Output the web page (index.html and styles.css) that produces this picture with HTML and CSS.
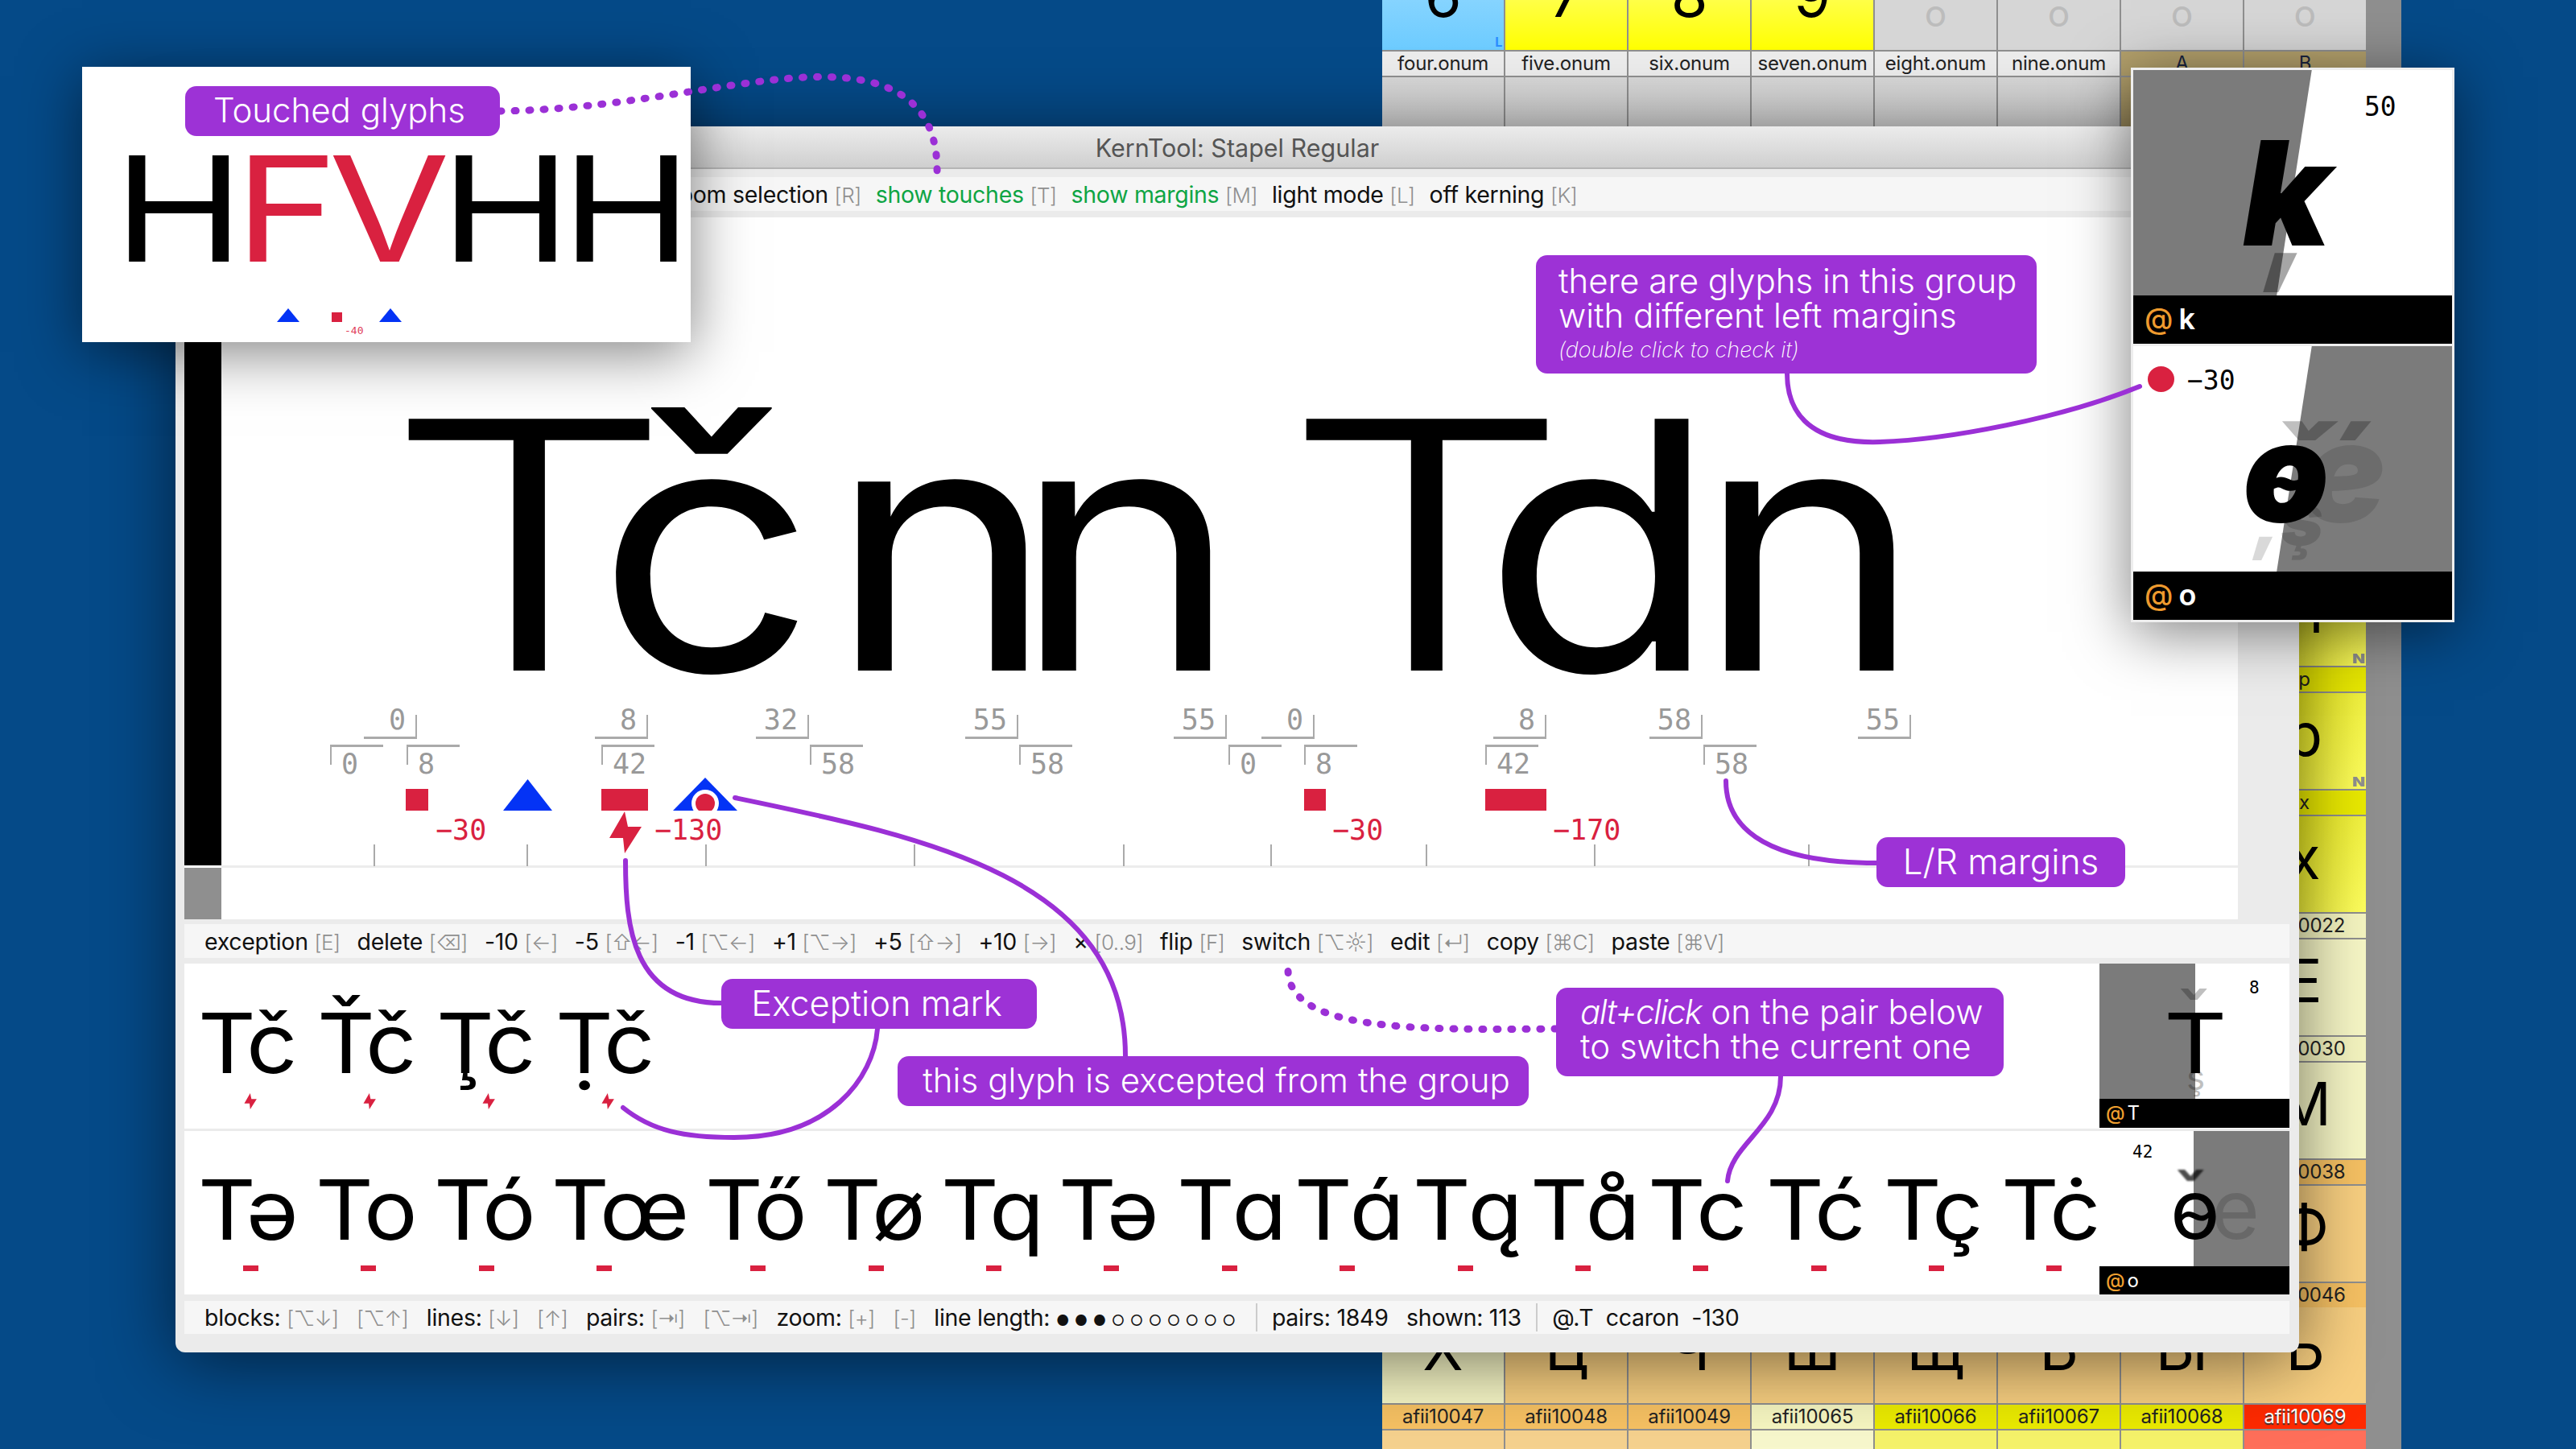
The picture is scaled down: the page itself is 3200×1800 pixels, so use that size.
FILE: index.html
```html
<!DOCTYPE html>
<html>
<head>
<meta charset="utf-8">
<title>KernTool: Stapel Regular</title>
<link rel="stylesheet" href="styles.css">
</head>
<body>

<!-- glyph table behind the kern window -->
<div class="sheet-back"></div>
<div class="sheet sheet-top">
  <div class="cell c-blue"><span class="g">6</span><i class="mark-l">L</i></div>
  <div class="cell c-yellow"><span class="g">7</span></div>
  <div class="cell c-yellow"><span class="g">8</span></div>
  <div class="cell c-yellow"><span class="g">9</span></div>
  <div class="cell c-gray"><span class="g g-empty">o</span></div>
  <div class="cell c-gray"><span class="g g-empty">o</span></div>
  <div class="cell c-gray"><span class="g g-empty">o</span></div>
  <div class="cell c-gray"><span class="g g-empty">o</span></div>
  <div class="lbl">four.onum</div>
  <div class="lbl">five.onum</div>
  <div class="lbl">six.onum</div>
  <div class="lbl">seven.onum</div>
  <div class="lbl">eight.onum</div>
  <div class="lbl">nine.onum</div>
  <div class="lbl l-tan">A</div>
  <div class="lbl l-tan">B</div>
  <div class="cell c-blank"></div>
  <div class="cell c-blank"></div>
  <div class="cell c-blank"></div>
  <div class="cell c-blank"></div>
  <div class="cell c-blank"></div>
  <div class="cell c-blank"></div>
  <div class="cell c-tan"></div>
  <div class="cell c-tan"></div>
</div>

<div class="sheet sheet-side">
  <div class="cell c-lemon"><span class="g g-stem">l</span><i class="mark-n">N</i></div>
  <div class="lbl l-yellow">p</div>
  <div class="cell c-lemon"><span class="g">p</span><i class="mark-n">N</i></div>
  <div class="lbl l-yellow">x</div>
  <div class="cell c-lemon"><span class="g">x</span></div>
  <div class="lbl l-pale">afii10022</div>
  <div class="cell c-pale"><span class="g">Е</span></div>
  <div class="lbl l-pale">afii10030</div>
  <div class="cell c-pale"><span class="g">М</span></div>
  <div class="lbl l-orange">afii10038</div>
  <div class="cell c-orange"><span class="g">Ф</span></div>
  <div class="lbl l-orange">afii10046</div>
  <div class="cell c-orange"><span class="g">Ь</span></div>
</div>

<div class="sheet sheet-bottom">
  <div class="cell c-pale"><span class="g">Х</span></div>
  <div class="cell c-orange"><span class="g">Ц</span></div>
  <div class="cell c-orange"><span class="g">Ч</span></div>
  <div class="cell c-orange"><span class="g">Ш</span></div>
  <div class="cell c-orange"><span class="g">Щ</span></div>
  <div class="cell c-orange"><span class="g">Ь</span></div>
  <div class="cell c-orange"><span class="g">Ы</span></div>
  <div class="cell c-orange"><span class="g">Ь</span></div>
  <div class="lbl l-orange">afii10047</div>
  <div class="lbl l-orange">afii10048</div>
  <div class="lbl l-orange">afii10049</div>
  <div class="lbl l-pale">afii10065</div>
  <div class="lbl l-yellow">afii10066</div>
  <div class="lbl l-yellow">afii10067</div>
  <div class="lbl l-yellow">afii10068</div>
  <div class="lbl l-red">afii10069</div>
  <div class="cell c-peach"></div>
  <div class="cell c-peach"></div>
  <div class="cell c-peach"></div>
  <div class="cell c-cream"></div>
  <div class="cell c-lime"></div>
  <div class="cell c-lime"></div>
  <div class="cell c-lime"></div>
  <div class="cell c-coral"></div>
</div>

<!-- kern window -->
<div class="window">
  <div class="titlebar">KernTool: Stapel Regular</div>

  <div class="bar bar-top">
    <span>zoom selection <b>[R]</b></span>
    <span class="on">show touches <b>[T]</b></span>
    <span class="on">show margins <b>[M]</b></span>
    <span>light mode <b>[L]</b></span>
    <span>off kerning <b>[K]</b></span>
  </div>

  <div class="stage">
    <div class="scroll">
      <div class="scroll-thumb"></div>
      <div class="scroll-rest"></div>
    </div>
    <div class="canvas-wrap">
      <div class="canvas">
        <div class="line-big">
          <span class="gl gl-t w-t1">T</span>
          <span class="gl gl-c w-c">č</span>
          <span class="gl gl-n w-n1">n</span>
          <span class="gl gl-n w-n2">n</span>
          <span class="gl gl-t w-t2">T</span>
          <span class="gl gl-d w-d">d</span>
          <span class="gl gl-n">n</span>
        </div>
        <div class="metrics">
          <div class="mr" style="left:177px">0</div>
          <div class="mr" style="left:464px">8</div>
          <div class="mr" style="left:664px">32</div>
          <div class="mr" style="left:924px">55</div>
          <div class="mr" style="left:1183px">55</div>
          <div class="mr" style="left:1292px">0</div>
          <div class="mr" style="left:1580px">8</div>
          <div class="mr" style="left:1774px">58</div>
          <div class="mr" style="left:2033px">55</div>

          <div class="ml" style="left:135px">0</div>
          <div class="ml" style="left:230px">8</div>
          <div class="ml" style="left:472px">42</div>
          <div class="ml" style="left:731px">58</div>
          <div class="ml" style="left:991px">58</div>
          <div class="ml" style="left:1251px">0</div>
          <div class="ml" style="left:1345px">8</div>
          <div class="ml" style="left:1570px">42</div>
          <div class="ml" style="left:1841px">58</div>

          <div class="kern" style="left:229px;width:28px"></div>
          <div class="kern" style="left:472px;width:58px"></div>
          <div class="kern" style="left:1345px;width:27px"></div>
          <div class="kern" style="left:1570px;width:76px"></div>

          <div class="tri tri-1"></div>
          <div class="tri tri-2"></div>
          <div class="tri-dot"></div>

          <svg class="bolt-big" viewBox="0 0 41 52"><path d="M20 0 L1 33 L18 33 L20 52 L41 19 L24 19 Z"/></svg>

          <div class="val" style="left:266px">−30</div>
          <div class="val" style="left:538px">−130</div>
          <div class="val" style="left:1380px">−30</div>
          <div class="val" style="left:1654px">−170</div>

          <i class="tick" style="left:189px"></i>
          <i class="tick" style="left:379px"></i>
          <i class="tick" style="left:601px"></i>
          <i class="tick" style="left:860px"></i>
          <i class="tick" style="left:1120px"></i>
          <i class="tick" style="left:1303px"></i>
          <i class="tick" style="left:1496px"></i>
          <i class="tick" style="left:1705px"></i>
          <i class="tick" style="left:1971px"></i>
        </div>
      </div>
    </div>
  </div>

  <div class="bar bar-mid">
    <span>exception <b>[E]</b></span>
    <span>delete <b>[⌫]</b></span>
    <span>-10 <b>[←]</b></span>
    <span>-5 <b>[⇧←]</b></span>
    <span>-1 <b>[⌥←]</b></span>
    <span>+1 <b>[⌥→]</b></span>
    <span>+5 <b>[⇧→]</b></span>
    <span>+10 <b>[→]</b></span>
    <span>× <b>[0..9]</b></span>
    <span>flip <b>[F]</b></span>
    <span>switch <b>[⌥☼]</b></span>
    <span>edit <b>[↵]</b></span>
    <span>copy <b>[⌘C]</b></span>
    <span>paste <b>[⌘V]</b></span>
  </div>

  <div class="row row-1">
    <div class="pairs">
      <div class="pair"><span>Tč</span><svg class="bolt" viewBox="0 0 41 52"><path d="M20 0 L1 33 L18 33 L20 52 L41 19 L24 19 Z"/></svg></div>
      <div class="pair"><span>Ťč</span><svg class="bolt" viewBox="0 0 41 52"><path d="M20 0 L1 33 L18 33 L20 52 L41 19 L24 19 Z"/></svg></div>
      <div class="pair"><span>Ţč</span><svg class="bolt" viewBox="0 0 41 52"><path d="M20 0 L1 33 L18 33 L20 52 L41 19 L24 19 Z"/></svg></div>
      <div class="pair"><span>Ṭč</span><svg class="bolt" viewBox="0 0 41 52"><path d="M20 0 L1 33 L18 33 L20 52 L41 19 L24 19 Z"/></svg></div>
    </div>
    <div class="thumb">
      <div class="shade shade-left"></div>
      <span class="ghost ghost-caron">ˇ</span>
      <span class="ghost ghost-hook">ş</span>
      <span class="glyph glyph-t">T</span>
      <span class="num num-r">8</span>
      <div class="thumb-foot"><em>@</em>T</div>
    </div>
  </div>

  <div class="row row-2">
    <div class="pairs">
      <div class="pair pair-b"><span>Tə</span><i class="dash"></i></div>
      <div class="pair pair-b"><span>To</span><i class="dash"></i></div>
      <div class="pair pair-b"><span>Tó</span><i class="dash"></i></div>
      <div class="pair pair-b pair-wide"><span>Tœ</span><i class="dash"></i></div>
      <div class="pair pair-b"><span>Tő</span><i class="dash"></i></div>
      <div class="pair pair-b"><span>Tø</span><i class="dash"></i></div>
      <div class="pair pair-b"><span>Tq</span><i class="dash"></i></div>
      <div class="pair pair-b"><span>Tə</span><i class="dash"></i></div>
      <div class="pair pair-b"><span>Tɑ</span><i class="dash"></i></div>
      <div class="pair pair-b"><span>Tɑ́</span><i class="dash"></i></div>
      <div class="pair pair-b"><span>Tɑ̨</span><i class="dash"></i></div>
      <div class="pair pair-b"><span>Tɑ̊</span><i class="dash"></i></div>
      <div class="pair pair-b"><span>Tc</span><i class="dash"></i></div>
      <div class="pair pair-b"><span>Tć</span><i class="dash"></i></div>
      <div class="pair pair-b"><span>Tç</span><i class="dash"></i></div>
      <div class="pair pair-b"><span>Tċ</span><i class="dash"></i></div>
    </div>
    <div class="thumb thumb-2">
      <div class="shade shade-right"></div>
      <span class="ghost ghost-e">e</span>
      <span class="ghost ghost-top">ˇ</span>
      <span class="glyph glyph-o">ө</span>
      <span class="num num-l">42</span>
      <div class="thumb-foot"><em>@</em>o</div>
    </div>
  </div>

  <div class="bar bar-bottom">
    <span>blocks: <b>[⌥↓]</b></span>
    <span><b>[⌥↑]</b></span>
    <span>lines: <b>[↓]</b></span>
    <span><b>[↑]</b></span>
    <span>pairs: <b>[⇥]</b></span>
    <span><b>[⌥⇥]</b></span>
    <span>zoom: <b>[+]</b></span>
    <span><b>[-]</b></span>
    <span class="len">line length: <u>●●●○○○○○○○</u></span>
    <span class="sep">pairs: 1849</span>
    <span>shown: 113</span>
    <span class="sep">@.T&nbsp; ccaron&nbsp; -130</span>
  </div>
</div>

<!-- floating panel: touched glyphs -->
<div class="float float-touch">
  <div class="touch-word">H<span class="red">FV</span>HH</div>
  <i class="touch-tri touch-tri-1"></i>
  <i class="touch-rect"></i>
  <i class="touch-tri touch-tri-2"></i>
  <span class="touch-val">-40</span>
</div>

<!-- floating panel: group previews -->
<div class="float float-group">
  <div class="big-thumb">
    <div class="big-shade big-shade-l"></div>
    <span class="heavy ghost-comma">,</span>
    <span class="heavy heavy-k">k</span>
    <span class="big-num big-num-r">50</span>
  </div>
  <div class="big-foot"><em>@</em>k</div>
  <div class="big-thumb big-thumb-2">
    <div class="big-shade big-shade-r"></div>
    <span class="heavy ghost-top2">ˇ´</span>
    <span class="heavy ghost-e2">e</span>
    <span class="heavy ghost-low">,ş</span>
    <span class="heavy heavy-o">ө</span>
    <i class="group-dot"></i>
    <span class="big-num big-num-l">−30</span>
  </div>
  <div class="big-foot"><em>@</em>o</div>
</div>

<!-- callout lines -->
<svg class="callouts" viewBox="0 0 3200 1800">
  <path class="dots" d="M621 138 C790 136 940 90 1040 96 C1125 101 1166 140 1164 217"/>
  <path class="dots" d="M1933 1278 C1750 1280 1600 1280 1600 1204"/>
  <path d="M2220 464 C2220 505 2240 552 2335 549 C2420 546 2560 520 2658 480"/>
  <path d="M2144 970 C2144 1020 2180 1072 2331 1072"/>
  <path d="M777 1069 C777 1150 785 1246 896 1246"/>
  <path d="M1090 1278 C1085 1340 1030 1413 912 1413 C850 1413 810 1405 774 1376"/>
  <path d="M913 991 C1150 1040 1398 1090 1398 1312"/>
  <path d="M2212 1337 C2212 1400 2150 1420 2146 1467"/>
</svg>

<!-- callout labels -->
<div class="note n-touched">Touched glyphs</div>
<div class="note n-group">there are glyphs in this group<br>with different left margins<small>(double click to check it)</small></div>
<div class="note n-margins">L/R margins</div>
<div class="note n-mark">Exception mark</div>
<div class="note n-except">this glyph is excepted from the group</div>
<div class="note n-alt"><em>alt+click</em> on the pair below<br>to switch the current one</div>

</body>
</html>
```
FILE: styles.css
```css
* { box-sizing: border-box; }
html, body { margin: 0; padding: 0; }
body {
  position: relative;
  width: 3200px;
  height: 1800px;
  overflow: hidden;
  background: #054a88;
  font-family: Inter, "Liberation Sans", sans-serif;
}

/* glyph table */
.sheet-back { position: absolute; left: 1717px; top: 0; width: 1266px; height: 1800px; background: #8f8f8f; }
.sheet {
  position: absolute;
  display: grid;
  gap: 2px 1.8px;
  background: #8f8f8f;
}
.sheet-top { left: 1717px; top: -57px; width: 1222px; grid-template-columns: repeat(8, 1fr); grid-template-rows: 119px 30px 119px; }
.sheet-bottom { left: 1717px; top: 1624px; width: 1222px; grid-template-columns: repeat(8, 1fr); grid-template-rows: 119px 30px 23px; }
.sheet-side { left: 2786px; top: 708px; width: 153px; grid-template-columns: 1fr; grid-template-rows: 119px 30px 119px 30px 119px 30px 119px 30px 119px 30px 119px 30px 119px; }

.cell { position: relative; overflow: hidden; text-align: center; }
.g { display: block; font-size: 74px; line-height: 74px; padding-top: 14px; color: #000; }
.g-empty { color: #bcbcbc; font-size: 46px; line-height: 46px; padding-top: 50px; }
.g-stem { padding-left: 30px; }
.lbl {
  background: #ececec;
  color: #222;
  font-size: 24px;
  line-height: 30px;
  letter-spacing: -.2px;
  text-align: center;
  white-space: nowrap;
  overflow: hidden;
}
.c-blue { background: linear-gradient(#9ddcff, #6ccbff); }
.c-yellow { background: linear-gradient(#ffff88, #ffff00); }
.c-gray { background: #d6d6d6; }
.c-blank { background: linear-gradient(#d8d8d8, #cbcbcb); }
.c-tan { background: #b5a26d; }
.c-lemon { background: linear-gradient(120deg, #d8d800, #ffff60); }
.c-pale { background: #f7f7c6; }
.c-orange { background: #f8cf80; }
.c-peach { background: #f5d18e; }
.c-cream { background: #f7f7cc; }
.c-lime { background: #f5f26a; }
.c-coral { background: #ff6f5a; }
.l-tan { background: #b5a26d; color: #1a2540; }
.l-yellow { background: #eaea00; }
.l-pale { background: #f5f5c0; }
.l-orange { background: #f6c163; }
.l-red { background: #ff2a00; color: #fff; text-shadow: 0 2px 1px #333; }
.mark-l { position: absolute; right: 2px; bottom: 2px; color: #2a8cff; font: 700 16px/16px Inter, sans-serif; }
.mark-n { position: absolute; right: 3px; bottom: 1px; color: #8f8f8f; font: 900 16px/16px Inter, sans-serif; transform: scaleX(1.3); }

/* kern window */
.window {
  position: absolute;
  left: 218px;
  top: 157px;
  width: 2638px;
  height: 1523px;
  display: flex;
  flex-direction: column;
  background: #ebebeb;
  border-radius: 0 0 12px 12px;
  box-shadow: 0 10px 90px rgba(0, 0, 0, .55);
}
.titlebar {
  height: 53px;
  flex: none;
  text-align: center;
  font-size: 30.5px;
  line-height: 54px;
  color: #555;
  background: linear-gradient(#ececec, #cfcfcf);
  border-bottom: 2px solid #b5b5b5;
}
.bar {
  height: 42px;
  flex: none;
  margin: 10px 12px 8px 11px;
  display: flex;
  align-items: center;
  gap: 17px;
  background: #f6f6f6;
  font-size: 28.5px;
  color: #111;
  letter-spacing: -.3px;
  white-space: nowrap;
}
.bar b { font-weight: 300; color: #8f8f8f; font-family: Inter, "DejaVu Sans", sans-serif; font-size: 26px; letter-spacing: -.5px; }
.bar .on { color: #0ea544; }
.bar-top { padding-left: 600px; gap: 18px; }
.bar-mid { margin: 6px 12px 7px 11px; padding-left: 25px; gap: 21px; }
.bar-bottom { margin: 8px 12px 0 11px; height: 41px; padding-left: 25px; gap: 22.5px; }
.bar .len u { text-decoration: none; font-size: 18px; letter-spacing: 6.5px; }
.bar .sep { border-left: 2px solid #ccc; padding-left: 18px; margin-left: -4px; }

.stage { height: 872px; flex: none; display: flex; margin: 0 76px 0 11px; background: #fff; }
.scroll { width: 46px; flex: none; display: flex; flex-direction: column; }
.scroll-thumb { height: 805px; background: #000; }
.scroll-rest { margin-top: 3px; height: 64px; background: #8f8f8f; }
.canvas-wrap { flex: 1; }
.canvas { position: relative; height: 808px; border-bottom: 3px solid #ececec; }

.line-big { display: flex; padding: 192px 0 0 203px; height: 600px; font-size: 430px; line-height: 430px; color: #000; }
.gl { display: block; flex: none; transform-origin: left; }
.gl-t { font-weight: 330; transform: scaleX(1.31); }
.gl-c, .gl-d { transform: scaleX(1.11); }
.gl-n { transform: scaleX(1.11); }
.w-t1 { width: 263px; }
.w-c { width: 288px; }
.w-n1 { width: 229px; }
.w-n2 { width: 335px; }
.w-t2 { width: 249px; }
.w-d { width: 265px; }

.metrics { position: absolute; left: 0; top: 600px; width: 100%; height: 205px; font-family: "DejaVu Sans Mono", monospace; font-size: 35px; }
.mr {
  position: absolute;
  top: 18px;
  width: 66px;
  height: 30px;
  padding-right: 12px;
  border-right: 2px solid #aaa;
  border-bottom: 3px solid #aaa;
  color: #999;
  line-height: 12px;
  text-align: right;
}
.ml {
  position: absolute;
  top: 55px;
  width: 66px;
  height: 25px;
  padding-left: 12px;
  border-left: 2px solid #aaa;
  border-top: 3px solid #aaa;
  color: #999;
  line-height: 42px;
}
.kern { position: absolute; top: 110px; height: 27px; background: #d92140; }
.tri { position: absolute; background: #0433f5; clip-path: polygon(50% 0, 100% 100%, 0 100%); }
.tri-1 { left: 350px; top: 98px; width: 61px; height: 39px; }
.tri-2 { left: 561px; top: 96px; width: 80px; height: 41px; }
.tri-dot { position: absolute; left: 589px; top: 116px; width: 24px; height: 24px; border-radius: 50%; background: #d92140; box-shadow: 0 0 0 5px #fff; clip-path: inset(-6px -6px 3px -6px); }
.bolt-big { position: absolute; left: 481px; top: 138px; width: 41px; height: 52px; fill: #d92140; }
.val { position: absolute; top: 143px; color: #d92140; line-height: 36px; }
.tick { position: absolute; top: 179px; width: 2px; height: 27px; background: #aaa; }

.row { flex: none; display: flex; margin: 0 12px 0 11px; background: #fff; }
.row-1 { height: 205px; }
.row-2 { height: 203px; margin-top: 3px; }
.pairs { flex: 1; min-width: 0; display: flex; padding-left: 17px; font-size: 103px; line-height: 103px; font-weight: 440; white-space: nowrap; color: #000; }
.row-1 .pairs { padding-top: 47px; }
.row-2 .pairs { padding-top: 46px; }
.pair { width: 148px; flex: none; display: flex; flex-direction: column; align-items: flex-start; letter-spacing: -3px; }
.pair span { transform: scaleX(1.08); transform-origin: left; }
.pair-b { width: 146.4px; }
.pair-wide { width: 191px; }
.bolt { width: 16px; height: 20px; margin: 11px 0 0 57px; fill: #d92140; }
.dash { width: 19px; height: 7px; margin: 18px 0 0 56px; background: #d92140; }

.thumb { position: relative; flex: none; width: 236px; overflow: hidden; background: #fff; }
.row-1 .thumb { height: 204px; }
.shade { position: absolute; top: 0; width: 119px; height: 168px; background: #7b7b7b; }
.shade-left { left: 0; }
.shade-right { right: 0; }
.glyph { position: absolute; line-height: 1; color: #000; font-size: 103px; }
.glyph-t { left: 86px; top: 47px; transform: scaleX(1.18); font-weight: 440; }
.glyph-o { left: 88px; top: 45px; }
.ghost { position: absolute; line-height: 1; color: rgba(0, 0, 0, .25); font-size: 103px; }
.ghost-caron { left: 96px; top: 20px; }
.ghost-hook { left: 108px; top: 119px; font-size: 44px; }
.ghost-e { left: 139px; top: 45px; color: rgba(0, 0, 0, .15); }
.ghost-top { left: 92px; top: 37px; color: rgba(0, 0, 0, .7); filter: blur(1px); }
.num { position: absolute; font: 21px/30px "DejaVu Sans Mono", monospace; color: #000; }
.num-r { left: 186px; top: 15px; }
.num-l { left: 41px; top: 11px; }
.thumb-foot { position: absolute; left: 0; right: 0; top: 168px; height: 36px; background: #000; color: #fff; font-size: 24px; line-height: 36px; padding-left: 8px; }
.thumb-foot em { font-style: normal; color: #f0a030; font-weight: 500; margin-right: 3px; }

/* floating panels */
.float { position: absolute; background: #fff; box-shadow: 0 12px 70px rgba(0, 0, 0, .5); }
.float-touch { left: 102px; top: 83px; width: 756px; height: 342px; }
.touch-word { position: absolute; left: 39px; top: 85px; font-size: 182px; line-height: 182px; letter-spacing: -10px; color: #000; transform: scaleX(1.2); transform-origin: left; white-space: nowrap; }
.red { color: #d92140; }
.touch-tri { position: absolute; top: 300px; width: 28px; height: 17px; background: #0433f5; clip-path: polygon(50% 0, 100% 100%, 0 100%); }
.touch-tri-1 { left: 242px; }
.touch-tri-2 { left: 369px; }
.touch-rect { position: absolute; left: 310px; top: 305px; width: 13px; height: 12px; background: #d92140; }
.touch-val { position: absolute; left: 326px; top: 320px; font: 13px/16px "DejaVu Sans Mono", monospace; color: #e0405a; }

.float-group { left: 2647px; top: 84px; width: 402px; height: 689px; padding: 3px; background: #eee; }
.big-thumb { position: relative; height: 280px; background: #fff; overflow: hidden; }
.big-thumb-2 { height: 280px; }
.big-foot { height: 60px; margin-bottom: 3px; background: #000; color: #fff; font-size: 36px; font-weight: 600; line-height: 58px; padding-left: 14px; }
.big-foot em { font-style: normal; color: #ee9a2e; font-weight: 500; margin-right: 7px; }
.big-shade { position: absolute; inset: 0; background: #7b7b7b; }
.big-shade-l { clip-path: polygon(0 0, 56% 0, 45% 100%, 0 100%); }
.big-shade-r { clip-path: polygon(56% 0, 100% 0, 100% 100%, 45% 100%); }
.heavy { position: absolute; font-weight: 900; font-style: italic; line-height: 1; color: #000; }
.heavy-k { left: 136px; top: 63px; font-size: 180px; }
.ghost-comma { left: 165px; top: 116px; font-size: 150px; color: rgba(0, 0, 0, .35); }
.heavy-o { left: 136px; top: 69px; font-size: 172px; }
.ghost-e2 { left: 210px; top: 69px; font-size: 172px; color: rgba(0, 0, 0, .12); }
.ghost-top2 { left: 170px; top: 80px; font-size: 150px; color: rgba(0, 0, 0, .25); }
.ghost-low { left: 150px; top: 170px; font-size: 90px; color: rgba(0, 0, 0, .15); }
.big-num { position: absolute; top: 28px; font: 33px/36px "DejaVu Sans Mono", monospace; color: #000; }
.big-num-r { left: 287px; }
.big-num-l { left: 67px; top: 25px; }
.group-dot { position: absolute; left: 18px; top: 25px; width: 33px; height: 32px; border-radius: 50%; background: #d92140; }

/* callouts */
.callouts { position: absolute; left: 0; top: 0; width: 3200px; height: 1800px; fill: none; stroke: #9b30d6; stroke-width: 6; stroke-linecap: round; }
.callouts .dots { stroke-width: 9; stroke-dasharray: 2 16; }
.note {
  position: absolute;
  background: #9d32d6;
  color: #fff;
  border-radius: 14px;
  font-size: 42px;
  font-weight: 300;
  line-height: 43px;
  white-space: nowrap;
  text-align: center;
}
.note em { font-style: italic; letter-spacing: -1.5px; }
.note small { display: block; font-size: 27px; font-weight: 200; font-style: italic; line-height: 44px; }
.n-touched { left: 230px; top: 107px; width: 391px; height: 62px; line-height: 60px; padding-right: 8px; }
.n-group { left: 1908px; top: 317px; width: 622px; height: 147px; padding: 10px 0 0 28px; text-align: left; }
.n-margins { left: 2331px; top: 1040px; width: 309px; height: 62px; line-height: 60px; font-size: 44px; }
.n-mark { left: 896px; top: 1216px; width: 392px; height: 62px; line-height: 60px; font-size: 43.5px; padding-right: 6px; }
.n-except { left: 1115px; top: 1312px; width: 784px; height: 62px; line-height: 60px; letter-spacing: .1px; padding-left: 8px; }
.n-alt { left: 1933px; top: 1227px; width: 556px; height: 110px; padding: 8px 0 0 30px; text-align: left; }
```
